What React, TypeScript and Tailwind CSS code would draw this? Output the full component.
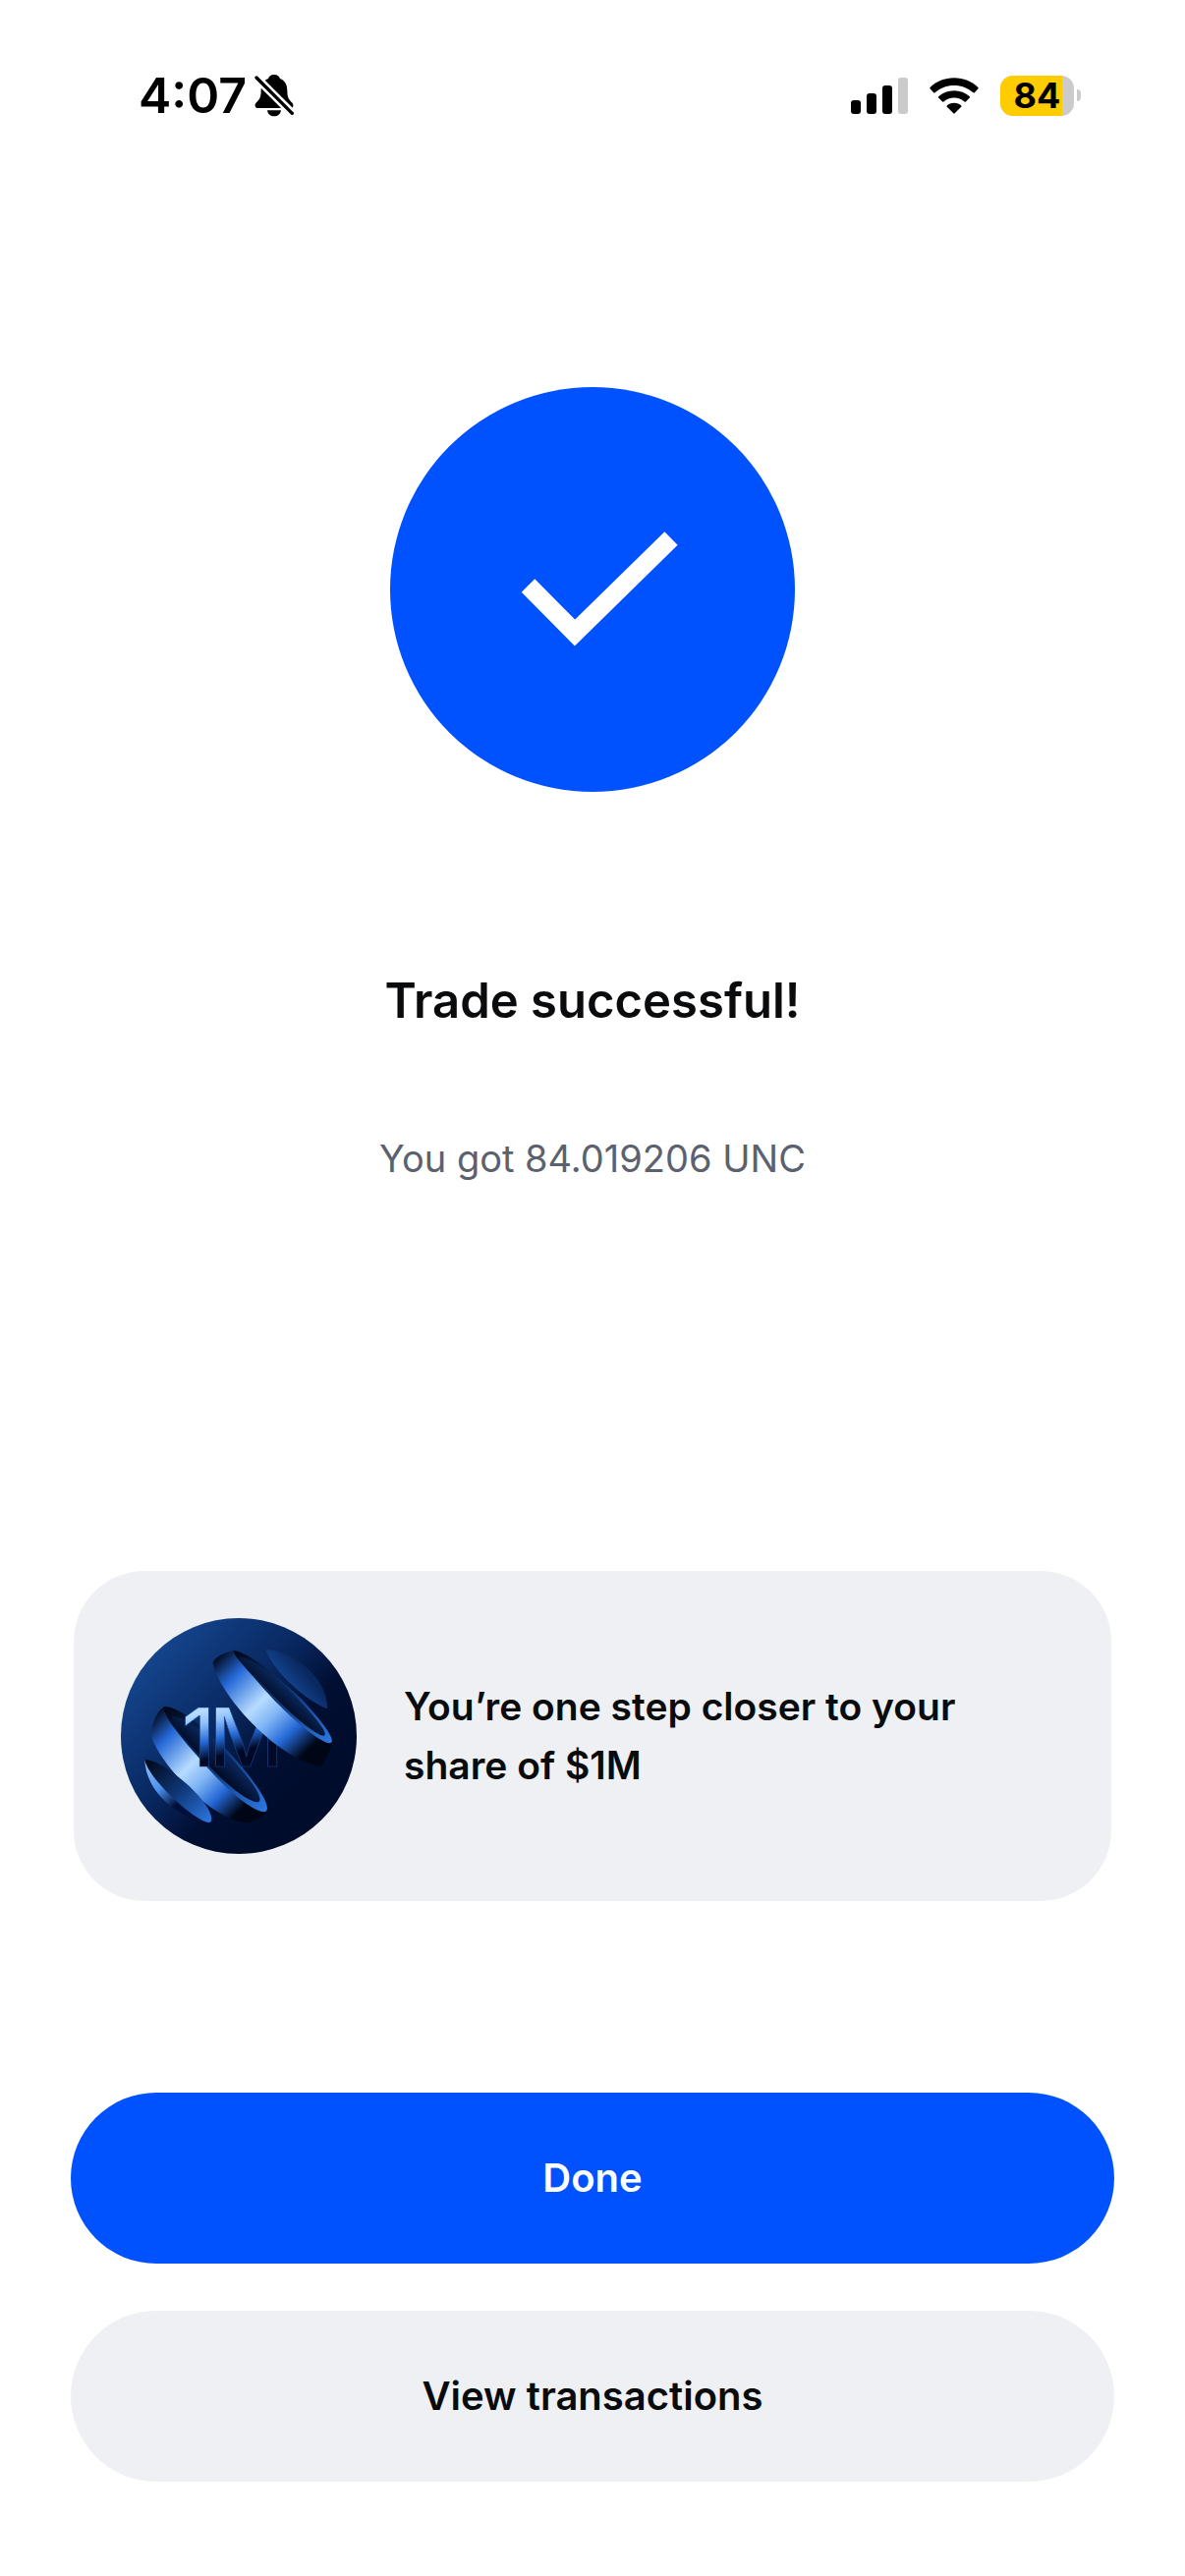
import React from "react";

interface ActionButtonProps {
  label: string;
  variant: "primary" | "secondary";
  onClick?: () => void;
}

function BellOffIcon() {
  return (
    <svg viewBox="0 0 120 130" className="w-10 h-11" aria-hidden="true">
      <path
        d="M60 2C49 2 44 8 42 14C24 21 20 38 20 50C20 72 15 77 6 87C-2 96 2 104 12 104H108C118 104 122 96 114 87C105 77 100 72 100 50C100 38 96 21 78 14C76 8 71 2 60 2Z"
        fill="#000"
      />
      <path d="M39 111H81C79 123 71 129 60 129C49 129 41 123 39 111Z" fill="#000" />
      <path d="M0 5L120 125" stroke="#fff" strokeWidth="25" />
      <path d="M6 11L115 120" stroke="#000" strokeWidth="10" strokeLinecap="round" />
    </svg>
  );
}

function SignalIcon() {
  return (
    <svg viewBox="0 0 58 37" className="w-[58px] h-[37px]" aria-hidden="true">
      <rect x="0" y="23" width="10" height="14" rx="3" />
      <rect x="16" y="16" width="10" height="21" rx="3" />
      <rect x="32" y="8" width="10" height="29" rx="3" />
      <rect x="48" y="0" width="10" height="37" rx="3" fill="#cbcbcb" />
    </svg>
  );
}

function WifiIcon() {
  return (
    <svg viewBox="0 0 150 112" className="w-[50px] h-[37px]" aria-hidden="true">
      <path d="M75 1C46 1 20 12 1 30Q-1 32 1 34L12 46Q14 48 16 46C32 32 52 24 75 24C98 24 118 32 134 46Q136 48 138 46L149 34Q151 32 149 30C130 12 104 1 75 1Z" />
      <path d="M75 40C56 40 40 47 27 58Q25 60 27 62L39 74Q41 76 43 74C52 66 63 62 75 62C87 62 98 66 107 74Q109 76 111 74L123 62Q125 60 123 58C110 47 94 40 75 40Z" />
      <path d="M75 78C66 78 59 81 53 86Q51 88 53 90L73 110Q75 112 77 110L97 90Q99 88 97 86C91 81 84 78 75 78Z" />
    </svg>
  );
}

function Battery({ level }: { level: number }) {
  return (
    <div className="flex items-center gap-[3px]" role="img" aria-label={`Battery ${level}%`}>
      <div className="relative w-[75px] h-[41px] rounded-[13px] overflow-hidden bg-[#cbcbcb]">
        <div className="absolute inset-y-0 left-0 bg-[#ffcc00]" style={{ width: `${level}%` }} />
        <span className="relative flex h-full items-center justify-center text-[36px] font-bold leading-none text-black">
          {level}
        </span>
      </div>
      <div className="w-1 h-3 rounded-r-full bg-[#cbcbcb]" />
    </div>
  );
}

function StatusBar() {
  return (
    <div className="flex items-center justify-between h-[194px] pl-[141px] pr-[106px]">
      <div className="flex items-center gap-2">
        <span className="text-[50px] font-semibold leading-none text-black">4:07</span>
        <BellOffIcon />
      </div>
      <div className="flex items-center gap-[22px]">
        <SignalIcon />
        <WifiIcon />
        <Battery level={84} />
      </div>
    </div>
  );
}

function SuccessIcon() {
  return (
    <svg viewBox="0 0 412 412" className="w-[412px] h-[412px]" aria-hidden="true">
      <circle cx="206" cy="206" r="206" fill="#0052ff" />
      <path d="M140.500 202L188 250L286 154" fill="none" stroke="#fff" strokeWidth="19" />
    </svg>
  );
}

// Sliced sphere with the prize amount between the rings
function RewardArt() {
  return (
    <svg viewBox="0 0 720 720" className="w-[240px] h-[240px] shrink-0" role="img" aria-label="$1M reward">
      <defs>
        <linearGradient id="sky" x1="0.1" y1="0.15" x2="0.75" y2="0.75">
          <stop offset="0" stopColor="#15468f" />
          <stop offset="0.5" stopColor="#08275f" />
          <stop offset="0.75" stopColor="#010f33" />
          <stop offset="1" stopColor="#000c2b" />
        </linearGradient>
        <linearGradient id="band" x1="0" y1="0" x2="1" y2="1">
          <stop offset="0.04" stopColor="#000616" />
          <stop offset="0.2" stopColor="#2468d6" />
          <stop offset="0.42" stopColor="#b7dcff" />
          <stop offset="0.54" stopColor="#7fb4f4" />
          <stop offset="0.68" stopColor="#2468d6" />
          <stop offset="0.83" stopColor="#000616" />
        </linearGradient>
        <linearGradient id="rim" x1="0" y1="0" x2="1" y2="1">
          <stop offset="0" stopColor="#000616" />
          <stop offset="0.5" stopColor="#0e3675" />
          <stop offset="1" stopColor="#2c78e4" />
        </linearGradient>
        <linearGradient id="inner" x1="0" y1="1" x2="1" y2="0">
          <stop offset="0.4" stopColor="#00071c" />
          <stop offset="0.62" stopColor="#0b2d68" />
        </linearGradient>
        <linearGradient id="cap" x1="0" y1="0.9" x2="1" y2="0.1">
          <stop offset="0.3" stopColor="#164a9c" />
          <stop offset="0.65" stopColor="#0a2860" />
        </linearGradient>
        <linearGradient id="bowl" x1="0" y1="0" x2="1" y2="1">
          <stop offset="0.1" stopColor="#7fb4f4" />
          <stop offset="0.35" stopColor="#4a90ec" />
          <stop offset="0.6" stopColor="#00103a" />
        </linearGradient>
        <linearGradient id="amount" gradientUnits="userSpaceOnUse" x1="300" y1="272" x2="345" y2="452">
          <stop offset="0" stopColor="#b7dcff" />
          <stop offset="0.2" stopColor="#8fc0fa" />
          <stop offset="0.5" stopColor="#2468d6" />
          <stop offset="0.78" stopColor="#000a26" />
        </linearGradient>
      </defs>
      <circle cx="360" cy="360" r="360" fill="url(#sky)" />

      {/* lower ring */}
      <path d="M132 270C104 290 90 335 94 365C125 450 270 610 378 624C400 626 432 608 446 588Z" fill="url(#band)" />
      <path d="M132 270C170 265 260 335 340 420C420 510 460 575 443 590C420 602 330 535 250 440C170 350 125 290 132 270Z" fill="url(#rim)" />
      <path d="M154 299C195 300 270 355 330 420C400 495 438 550 420 562C390 565 310 500 250 430C190 365 155 320 154 299Z" fill="url(#inner)" />

      <text
        x="185 270"
        y="453"
        fontSize="248"
        fontWeight="500"
        fill="url(#amount)"
        stroke="#1a4590"
        strokeWidth="2"
        className="font-['Inter',sans-serif]"
      >
        1M
      </text>

      {/* upper ring */}
      <path d="M346 99C320 104 290 117 281 135C295 230 480 435 610 452C625 435 640 405 645 381Z" fill="url(#band)" />
      <path d="M346 99C390 105 470 170 550 245C625 325 660 378 638 382C610 382 520 310 440 220C370 140 340 110 346 99Z" fill="url(#rim)" />
      <path d="M362 119C400 120 470 175 540 245C605 315 632 350 621 359C595 360 510 285 445 215C390 155 360 130 362 119Z" fill="url(#inner)" />

      {/* caps */}
      <path d="M442 97C520 95 635 185 630 277C570 255 470 170 442 97Z" fill="url(#cap)" />
      <path d="M73 432C75 530 175 615 272 623L230 540Z" fill="url(#bowl)" />
      <path d="M73 432C110 430 190 490 235 540C280 590 285 625 268 624C220 618 80 485 73 432Z" fill="url(#rim)" />
    </svg>
  );
}

function ActionButton({ label, variant, onClick }: ActionButtonProps) {
  const colors =
    variant === "primary" ? "bg-[#0052ff] text-white" : "bg-[#eef0f3] text-[#0a0b0d]";

  return (
    <button
      type="button"
      onClick={onClick}
      className={`w-full h-[174px] rounded-full text-[40px] font-semibold ${colors}`}
    >
      {label}
    </button>
  );
}

export default function App() {
  const handleDone = () => {
    console.log("Done clicked");
  };

  const handleViewTransactions = () => {
    console.log("View transactions clicked");
  };

  return (
    <div className="min-h-screen flex flex-col bg-white font-['Inter',sans-serif] text-[#0a0b0d]">
      <StatusBar />

      <main className="flex-1 flex flex-col px-[72px] pb-24">
        {/* Result */}
        <div className="flex flex-col items-center pt-[200px] text-center">
          <SuccessIcon />
          <h1 className="mt-[180px] text-[49px] leading-[66px] font-semibold">Trade successful!</h1>
          <p className="mt-[94px] text-[38px] leading-[66px] text-[#5b616e]">You got 84.019206 UNC</p>
        </div>

        {/* Reward banner */}
        <div className="mt-auto mx-[3px] flex items-center gap-12 rounded-[72px] bg-[#eef0f3] p-12">
          <RewardArt />
          <p className="max-w-[600px] text-[39px] leading-[60px] font-semibold">
            You’re one step closer to your share of $1M
          </p>
        </div>

        {/* Actions */}
        <div className="mt-[195px] flex flex-col gap-12">
          <ActionButton label="Done" variant="primary" onClick={handleDone} />
          <ActionButton label="View transactions" variant="secondary" onClick={handleViewTransactions} />
        </div>
      </main>
    </div>
  );
}
